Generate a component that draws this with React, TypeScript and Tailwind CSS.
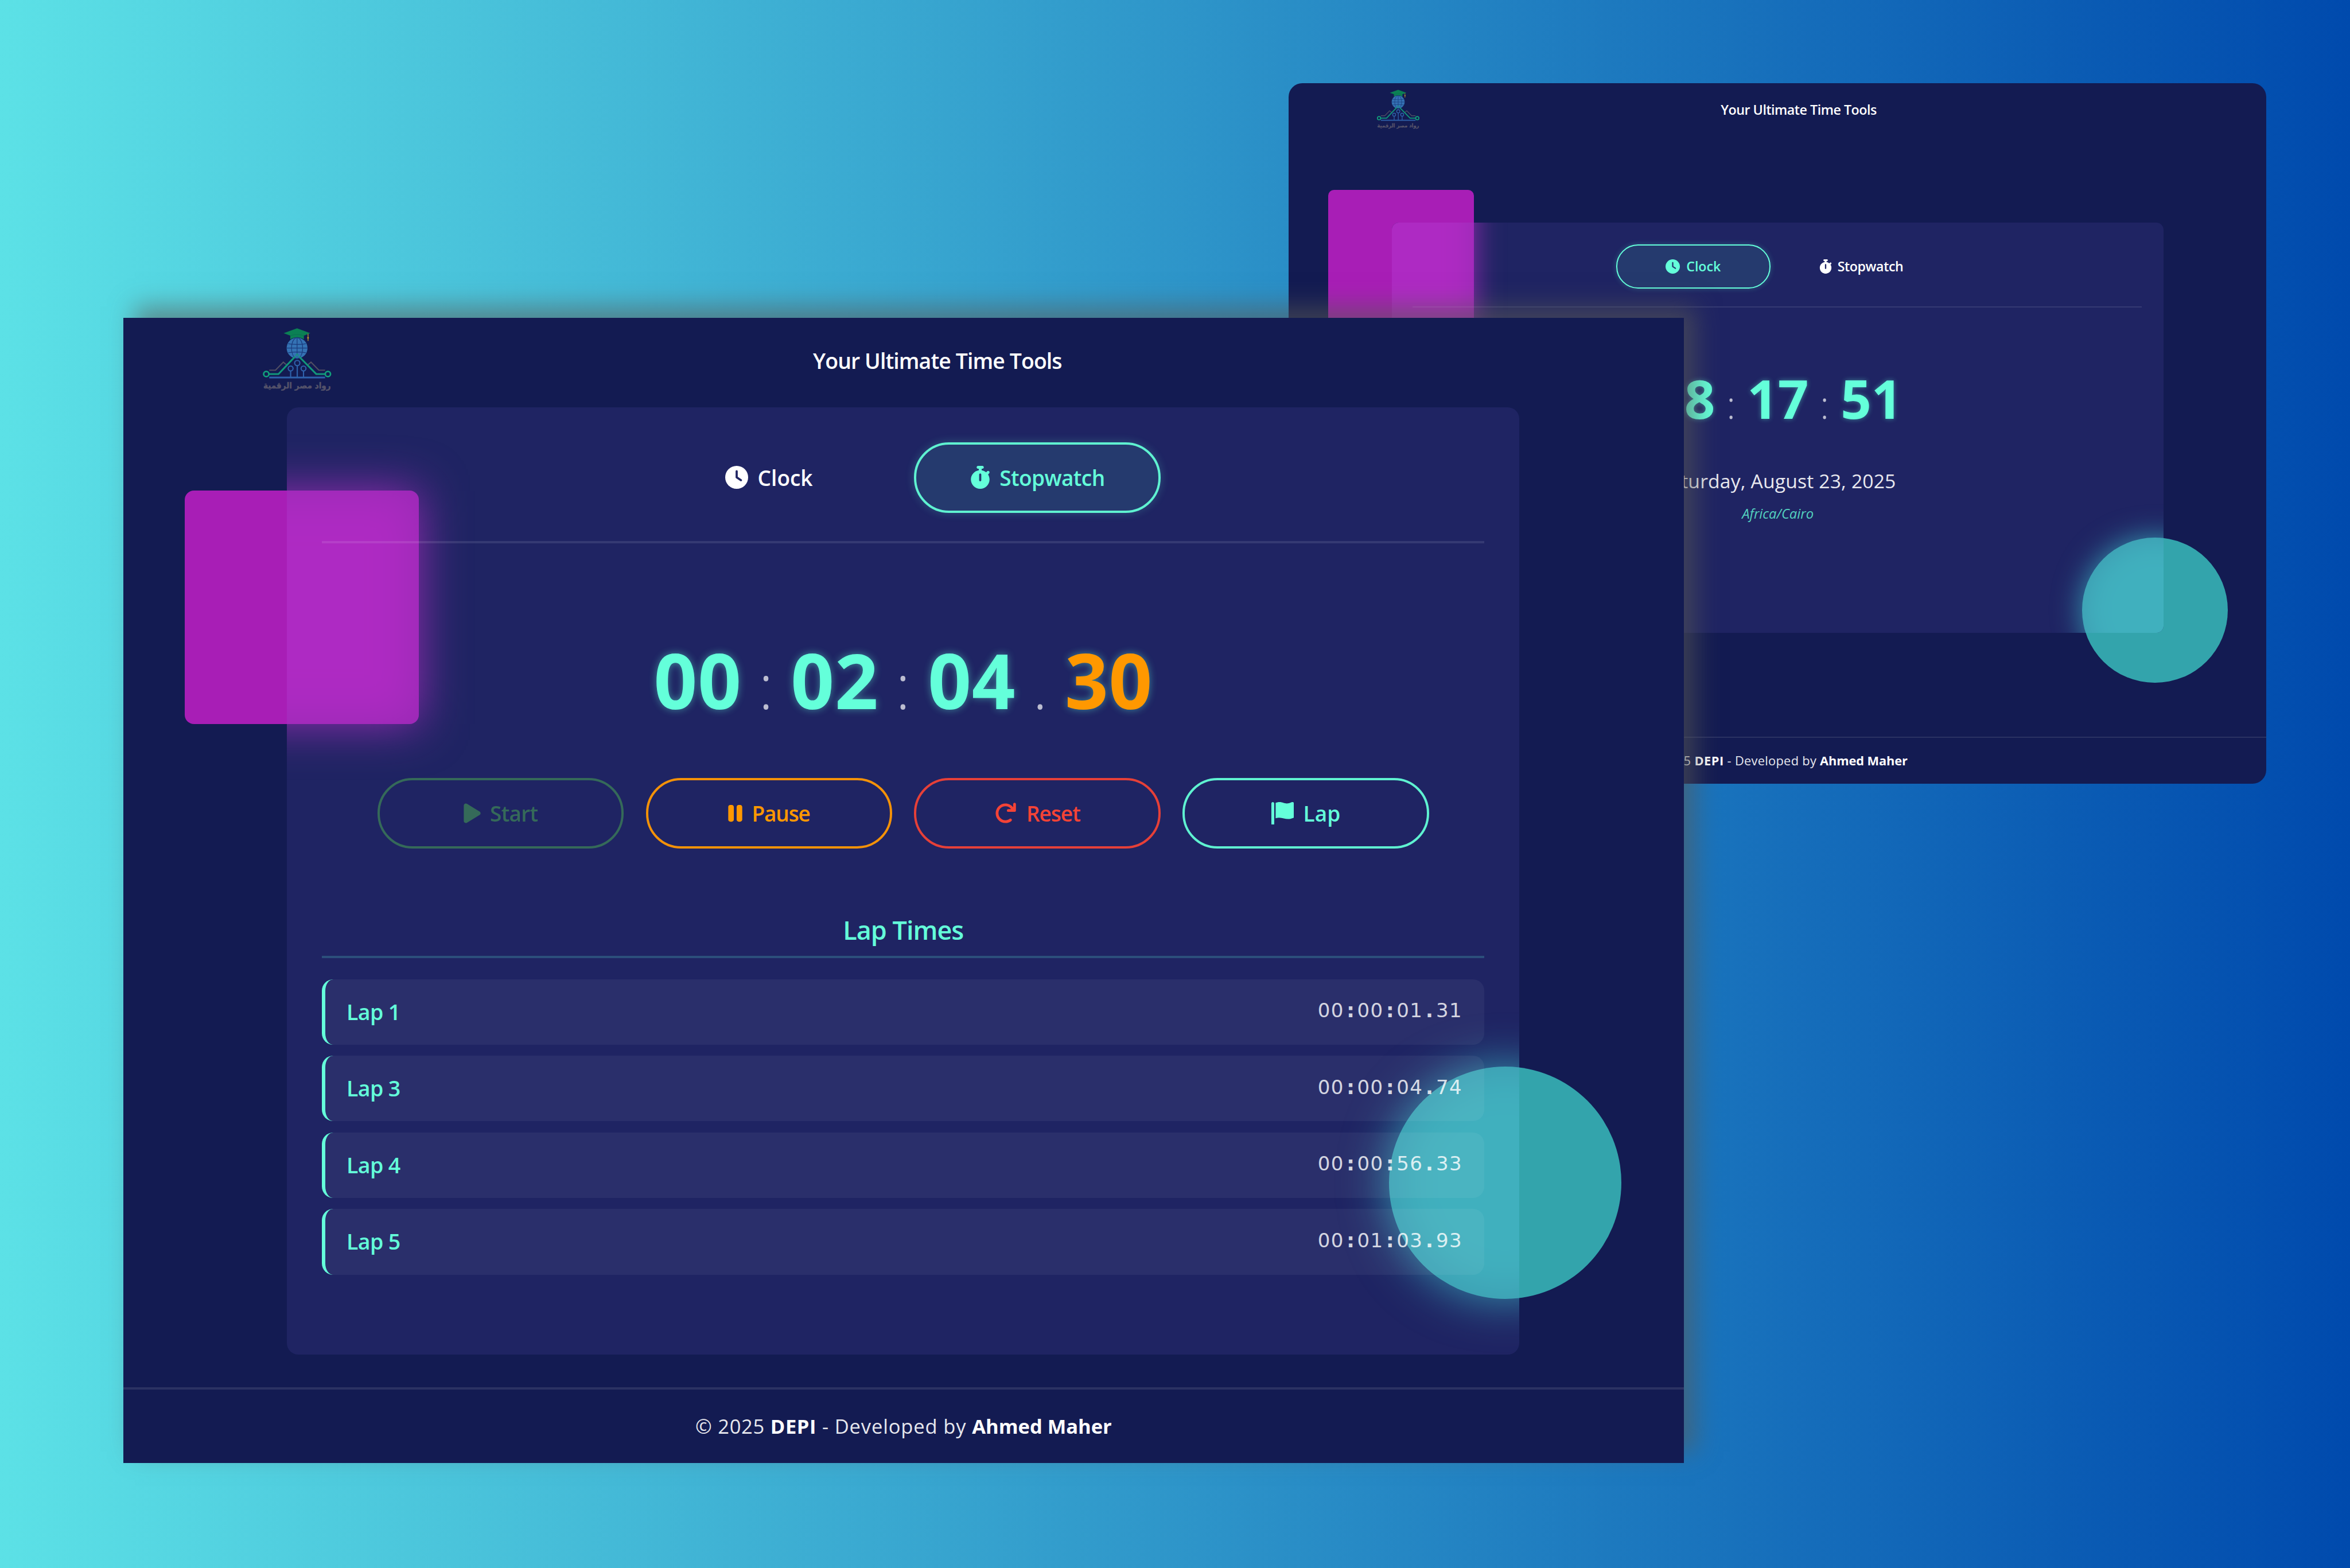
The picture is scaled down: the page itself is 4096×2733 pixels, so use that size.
import type { ReactNode } from "react";
import { FaClock, FaPause, FaStopwatch } from "react-icons/fa6";

const laps = [
  { name: "Lap 1", time: "00:00:01.31" },
  { name: "Lap 3", time: "00:00:04.74" },
  { name: "Lap 4", time: "00:00:56.33" },
  { name: "Lap 5", time: "00:01:03.93" },
];

function Logo({ className }: { className: string }) {
  return (
    <svg viewBox="60 80 410 370" className={className} fill="none" overflow="visible" aria-label="DEPI">
      <circle cx="267" cy="201" r="60" fill="#3472b4" />
      <g stroke="#1a3a7c" strokeWidth="4">
        <path d="M267 141V261M208 201H326M216 176Q267 184 318 176M216 228Q267 218 318 228" />
        <ellipse cx="267" cy="201" rx="32" ry="60" />
      </g>
      <path d="M267 87L343 115L306 129V151Q267 126 228 151V129L190 115Z" fill="#0b8054" />
      <path d="M228 130Q267 116 306 130" stroke="#0a6f50" strokeWidth="3" />
      <path d="M330 119V160" stroke="#a9862f" strokeWidth="5" />
      <circle cx="330" cy="142" r="5" fill="#c99b2c" />
      <path d="M107 328H143L188 282L205 296M428 328H392L347 282L330 296" stroke="#504e63" strokeWidth="7" />
      <path d="M105 350H160L257 248L267 238L277 248L377 350H429" stroke="#12967a" strokeWidth="10" />
      <path d="M240 240H295L267 262Z" fill="#3472b4" opacity="0.6" />
      <circle cx="90" cy="350" r="15" stroke="#12a07c" strokeWidth="9" />
      <circle cx="444" cy="350" r="15" stroke="#12a07c" strokeWidth="9" />
      <g stroke="#2f62ab" strokeWidth="7">
        <circle cx="268" cy="287" r="15" />
        <circle cx="230" cy="318" r="14" />
        <circle cx="304" cy="318" r="14" />
        <path d="M268 302V368M230 332V368M304 332V368" />
        <path d="M107 370H428" strokeWidth="10" />
      </g>
      <text
        x="267"
        y="434"
        textAnchor="middle"
        textLength="388"
        lengthAdjust="spacingAndGlyphs"
        direction="rtl"
        fill="#55536a"
        stroke="#55536a"
        strokeWidth="1.5"
        className="font-['DejaVu_Sans',sans-serif] text-[48px] font-bold"
      >
        رواد مصر الرقمية
      </text>
    </svg>
  );
}

function PlayIcon({ className }: { className: string }) {
  return (
    <svg viewBox="0 0 384 512" className={className} fill="currentColor">
      <path d="M361 215C375.3 223.8 384 239.3 384 256C384 272.7 375.3 288.2 361 296.1L73.03 472.1C58.21 482 39.66 482.4 24.52 473.9C9.377 465.4 0 449.4 0 432V80C0 62.64 9.377 46.63 24.52 38.13C39.66 29.64 58.21 29.99 73.03 39.04L361 215z" />
    </svg>
  );
}

function ResetIcon({ className }: { className: string }) {
  return (
    <svg viewBox="0 0 512 512" className={className} fill="currentColor">
      <path d="M496 48V192c0 17.69-14.31 32-32 32H320c-17.69 0-32-14.31-32-32s14.31-32 32-32h63.39c-29.97-39.7-77.25-63.78-127.6-63.78C167.7 96.22 96 167.9 96 256s71.69 159.8 159.8 159.8c34.88 0 68.03-11.03 95.88-31.94c14.22-10.53 34.22-7.75 44.81 6.375c10.59 14.16 7.75 34.22-6.375 44.81c-39.03 29.28-85.36 44.86-134.2 44.86C132.5 479.9 32 379.4 32 256s100.5-223.9 223.9-223.9c69.15 0 134 32.47 176.1 86.12V48c0-17.69 14.31-32 32-32S496 30.31 496 48z" />
    </svg>
  );
}

function FlagIcon({ className }: { className: string }) {
  return (
    <svg viewBox="0 0 512 512" className={className} fill="currentColor">
      <path d="M64 496C64 504.8 56.75 512 48 512h-32C7.25 512 0 504.8 0 496V32c0-17.75 14.25-32 32-32s32 14.25 32 32V496zM476.3 0c-6.365 0-13.01 1.35-19.34 4.233c-45.69 20.86-79.56 27.94-107.8 27.94c-59.96 0-94.81-31.86-163.9-31.87C160.9 .3055 131.6 4.867 96 15.75v350.5c32-9.984 59.87-14.1 84.85-14.1c73.63 0 124.9 31.78 198.6 31.78c31.91 0 68.02-5.971 111.1-23.09C504.1 355.9 512 344.4 512 332.1V30.73C512 11.1 495.3 0 476.3 0z" />
    </svg>
  );
}

function PillButton({ tone, children }: { tone: string; children: ReactNode }) {
  return (
    <button
      className={`flex h-[123px] w-[429.5px] items-center justify-center gap-[16.5px] rounded-[61px] border-4 text-[37px] font-semibold ${tone}`}
    >
      {children}
    </button>
  );
}

function LapTime({ value }: { value: string }) {
  return (
    <span className="flex pb-1 font-['DejaVu_Sans',sans-serif] text-[34px] text-white/80">
      {value.split(/([:.])/).map((part, i) =>
        part.length === 1 ? (
          <span key={i} className="w-[22.9px] text-center font-bold">
            {part}
          </span>
        ) : (
          <span key={i} className="tracking-[1.3px]">
            {part}
          </span>
        ),
      )}
    </span>
  );
}

function ClockWindow() {
  return (
    <section className="absolute left-[2246.3px] top-[144.8px] flex h-[1221.2px] w-[1703.6px] flex-col overflow-hidden rounded-3xl bg-[#131b52]">
      <div className="absolute left-[68.5px] top-[186px] size-[254.5px] rounded-[10px] bg-[#a81eb6]" />
      <div className="absolute left-[1382.8px] top-[792px] size-[253.5px] rounded-full bg-[#33a4ac]" />

      <header className="flex h-[94px] shrink-0 items-center pl-[151.7px]">
        <Logo className="mb-1 h-[69.8px] w-[77.2px]" />
        <h1 className="ml-[524px] whitespace-nowrap text-[23.3px] font-semibold tracking-[-0.5px]">Your Ultimate Time Tools</h1>
      </header>

      <main className="relative ml-[180px] mt-[149.1px] flex h-[715.4px] w-[1344.7px] shrink-0 flex-col overflow-hidden rounded-[12.5px] bg-[#1f2463] px-[38px] pt-[38px]">
        <div className="absolute left-[-111.5px] top-[-57.1px] size-[254.5px] bg-[#962cb2] blur-[25px]" />
        <div className="absolute left-[1202.8px] top-[549px] size-[253.5px] rounded-full bg-[#3596af] blur-[25px]" />
        <div className="absolute left-[-111.5px] top-[-57.1px] size-[254.5px] rounded-[10px] bg-[#b42bc7]/80" />
        <div className="absolute left-[1202.8px] top-[549px] size-[253.5px] rounded-full bg-[#43b6c2]/80" />

        <nav className="relative -ml-[2px] flex justify-center gap-[24px] border-b-[2.5px] border-white/10 pb-[30.7px] text-[23.2px] font-semibold">
          <button className="flex h-[77.3px] w-[268.8px] items-center justify-center gap-[11px] rounded-[38px] border-[2.5px] border-[#64ffda] bg-[#64ffda]/10 text-[#64ffda] shadow-[0_0_10px_rgba(100,255,218,0.25)]">
            <FaClock className="size-[25px]" />
            <span>Clock</span>
          </button>
          <button className="flex h-[77.3px] w-[268.8px] items-center justify-center gap-[10px]">
            <FaStopwatch className="h-[25px] w-[22px]" />
            <span className="tracking-[-0.4px]">Stopwatch</span>
          </button>
        </nav>

        <div className="relative mt-[94.6px] flex h-[128px] items-baseline justify-center text-[93.8px] font-bold leading-[128px] text-[#64ffda] [text-shadow:0_0_9px_rgba(100,255,218,0.45)]">
          <span className="w-[107px] text-center">08</span>
          <span className="w-[56px] text-center text-[66px] font-light text-white/70 [text-shadow:none]">:</span>
          <span className="w-[107px] text-center">17</span>
          <span className="w-[56px] text-center text-[66px] font-light text-white/70 [text-shadow:none]">:</span>
          <span className="w-[107px] text-center">51</span>
        </div>
        <p className="relative mt-[56.6px] text-center text-[33.7px] leading-[46px] tracking-[0.15px] text-white/90">Saturday, August 23, 2025</p>
        <p className="relative mt-[17.6px] text-center text-[23.8px] italic leading-[32px] text-[#64ffda]/80">Africa/Cairo</p>
      </main>

      <footer className="mt-auto flex h-[82px] shrink-0 items-center justify-center whitespace-pre border-t-[2.5px] border-white/10 text-[21.8px] text-white/90">
        <p>
          <span className="tracking-[0.4px]">© 2025 </span>
          <b className="tracking-[0.5px] text-white">DEPI</b>
          <span className="tracking-[0.3px]"> - Developed by </span>
          <b className="tracking-[-0.1px] text-white">Ahmed Maher</b>
        </p>
      </footer>
    </section>
  );
}

function StopwatchWindow() {
  return (
    <section className="absolute left-[214.6px] top-[553.6px] flex h-[1996.4px] w-[2720.6px] flex-col bg-[#131b52] shadow-[20px_-20px_40px_rgba(89,90,84,0.58)]">
      <div className="absolute left-[107.9px] top-[301px] size-[407.4px] rounded-[16px] bg-[#a81eb6]" />
      <div className="absolute left-[2206.9px] top-[1305px] size-[405px] rounded-full bg-[#33a4ac]" />

      <header className="flex h-[150px] shrink-0 items-center pl-[240.5px]">
        <Logo className="mb-1 h-[112.3px] w-[124.4px]" />
        <h1 className="ml-[837.5px] whitespace-nowrap text-[37.4px] font-semibold tracking-[-0.9px]">Your Ultimate Time Tools</h1>
      </header>

      <main className="relative ml-[285.4px] mt-[6.3px] flex h-[1650.9px] w-[2148.5px] shrink-0 flex-col overflow-hidden rounded-[20px] bg-[#1f2463] px-[61px] pt-[61px]">
        <div className="absolute left-[-177.5px] top-[144.7px] size-[407.4px] bg-[#962cb2] blur-[41px]" />
        <div className="absolute left-[1921.5px] top-[1148.7px] size-[405px] rounded-full bg-[#3596af] blur-[41px]" />
        <div className="absolute left-[-177.5px] top-[144.7px] size-[407.4px] rounded-[16px] bg-[#b42bc7]/80" />
        <div className="absolute left-[1921.5px] top-[1148.7px] size-[405px] rounded-full bg-[#43b6c2]/80" />

        <nav className="relative flex justify-center gap-[38.3px] border-b-4 border-white/10 pb-[49px]">
          <PillButton tone="border-transparent text-white">
            <FaClock className="size-10" />
            <span>Clock</span>
          </PillButton>
          <PillButton tone="border-[#5ff2d1] bg-[#64ffda]/10 text-[#64ffda] shadow-[0_0_16px_rgba(100,255,218,0.22)]">
            <FaStopwatch className="h-10 w-[35px]" />
            <span className="tracking-[-0.6px]">Stopwatch</span>
          </PillButton>
        </nav>

        <div className="relative mt-[148px] flex h-[180px] items-baseline justify-center text-[132.6px] font-bold leading-[180px] tracking-[0.8px] text-[#64ffda] [text-shadow:0_0_14px_rgba(100,255,218,0.45)]">
          <span className="w-[153px] text-center">00</span>
          <span className="w-[85.8px] text-center text-[107px] font-light text-white/70 [text-shadow:none]">:</span>
          <span className="w-[153px] text-center">02</span>
          <span className="w-[85.8px] text-center text-[107px] font-light text-white/70 [text-shadow:none]">:</span>
          <span className="w-[153px] text-center">04</span>
          <span className="w-[85.8px] text-center text-[107px] font-light text-white/70 [text-shadow:none]">.</span>
          <span className="w-[153px] text-center text-[#ff9800]">30</span>
        </div>

        <div className="relative mt-[81.3px] flex justify-center gap-[38.3px]">
          <PillButton tone="border-[#4caf50] text-[#4caf50] opacity-50">
            <PlayIcon className="h-[39px] w-[30px]" />
            <span className="tracking-[-0.7px]">Start</span>
          </PillButton>
          <PillButton tone="border-[#f49208] text-[#ff9800]">
            <FaPause className="h-[39px] w-[25px]" />
            <span className="tracking-[-1.2px]">Pause</span>
          </PillButton>
          <PillButton tone="border-[#e64038] text-[#f44336]">
            <ResetIcon className="size-[39px]" />
            <span className="tracking-[-1px]">Reset</span>
          </PillButton>
          <PillButton tone="border-[#5ff2d1] text-[#64ffda]">
            <FlagIcon className="size-[39.5px]" />
            <span>Lap</span>
          </PillButton>
        </div>

        <h2 className="relative mt-[111px] border-b-4 border-[#64ffda]/20 pb-[13.4px] text-center text-[45px] font-semibold leading-[62px] tracking-[-1px] text-[#64ffda]">
          Lap Times
        </h2>

        <ul className="relative mt-[37px] flex flex-col gap-[19.3px]">
          {laps.map((lap) => (
            <li
              key={lap.name}
              className="flex h-[114.3px] items-center justify-between rounded-[20px] border-l-[6px] border-[#64ffda] bg-white/5 pl-[37px] pr-[38.6px]"
            >
              <span className="text-[37.5px] font-semibold tracking-[-0.6px] text-[#64ffda]">{lap.name}</span>
              <LapTime value={lap.time} />
            </li>
          ))}
        </ul>
      </main>

      <footer className="mt-auto flex h-[132px] shrink-0 items-center justify-center whitespace-pre border-t-4 border-white/10 text-[34.5px] text-white/90">
        <p>
          <span className="tracking-[0.75px]">© 2025 </span>
          <b className="tracking-[0.6px] text-white">DEPI</b>
          <span className="tracking-[0.85px]"> - Developed by </span>
          <b className="text-white">Ahmed Maher</b>
        </p>
      </footer>
    </section>
  );
}

export default function App() {
  return (
    <div className="relative h-[2733px] w-[4096px] overflow-hidden bg-[linear-gradient(90deg,#5ce1e6,#004aad)] font-['Open_Sans','Noto_Sans',sans-serif] text-white">
      <ClockWindow />
      <StopwatchWindow />
    </div>
  );
}
